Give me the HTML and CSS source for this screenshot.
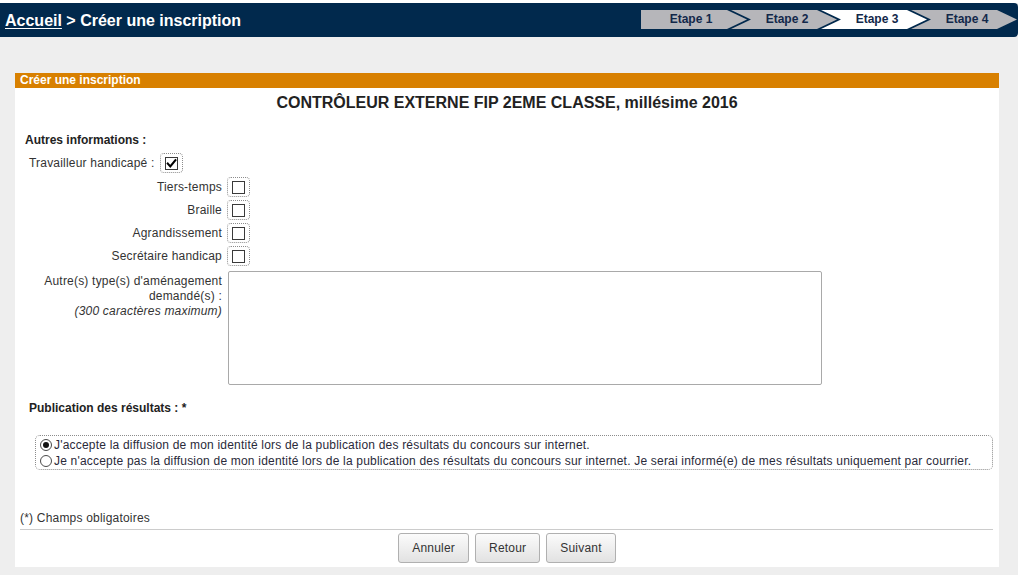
FILE: index.html
```html
<!DOCTYPE html>
<html lang="fr">
<head>
<meta charset="utf-8">
<title>Créer une inscription</title>
<link rel="stylesheet" href="styles.css">
</head>
<body>
<div class="page">
  <header class="topbar">
    <h1 class="crumb"><a href="#" class="crumb-link">Accueil</a> &gt; Créer une inscription</h1>
    <ol class="steps">
      <li class="step step-first">Etape 1</li>
      <li class="step">Etape 2</li>
      <li class="step step-current">Etape 3</li>
      <li class="step">Etape 4</li>
    </ol>
  </header>

  <main class="panel">
    <div class="panel-head">Créer une inscription</div>
    <h2 class="concours">CONTRÔLEUR EXTERNE FIP 2EME CLASSE, millésime 2016</h2>

    <section class="form">
      <h3 class="section-title">Autres informations :</h3>

      <div class="row-main">
        <span class="label-main">Travailleur handicapé :</span>
        <span class="cb-wrap"><span class="cb"><svg class="check" viewBox="0 0 11 11" width="11" height="11"><path d="M1.8 5.6 L4.3 8.4 L9.4 2.2" fill="none" stroke="#000" stroke-width="2.1" stroke-linecap="square"/></svg></span></span>
      </div>

      <div class="row row-first">
        <span class="label">Tiers-temps</span>
        <span class="cb-wrap"><span class="cb"></span></span>
      </div>
      <div class="row">
        <span class="label">Braille</span>
        <span class="cb-wrap"><span class="cb"></span></span>
      </div>
      <div class="row">
        <span class="label">Agrandissement</span>
        <span class="cb-wrap"><span class="cb"></span></span>
      </div>
      <div class="row">
        <span class="label">Secrétaire handicap</span>
        <span class="cb-wrap"><span class="cb"></span></span>
      </div>

      <div class="row row-text">
        <label class="label label-text" for="amenagement">Autre(s) type(s) d'aménagement<br>demandé(s) :<br><em>(300 caractères maximum)</em></label>
        <textarea id="amenagement" class="textarea"></textarea>
      </div>

      <h3 class="section-title section-pub">Publication des résultats : *</h3>

      <div class="radios">
        <div class="radio-line"><span class="radio radio-on"></span>J'accepte la diffusion de mon identité lors de la publication des résultats du concours sur internet.</div>
        <div class="radio-line"><span class="radio"></span>Je n'accepte pas la diffusion de mon identité lors de la publication des résultats du concours sur internet. Je serai informé(e) de mes résultats uniquement par courrier.</div>
      </div>
    </section>

    <p class="note">(*) Champs obligatoires</p>
    <div class="actions">
      <button class="btn" type="button">Annuler</button>
      <button class="btn" type="button">Retour</button>
      <button class="btn" type="button">Suivant</button>
    </div>
  </main>
</div>
</body>
</html>
```

FILE: styles.css
```css
* { box-sizing: border-box; }

html, body {
  margin: 0;
  padding: 0;
  background: #ffffff;
}

body {
  padding-top: 3px;
  font-family: "Liberation Sans", Arial, sans-serif;
  font-size: 12px;
  letter-spacing: 0.2px;
  color: #333333;
}

.page {
  width: 1018px;
  height: 572px;
  background: #eeeeee;
  display: flex;
  flex-direction: column;
}

/* ---------- top bar ---------- */
.topbar {
  height: 34px;
  background: #01294d;
  border-radius: 0 4px 4px 0;
  display: flex;
  align-items: center;
  justify-content: space-between;
  padding-left: 5px;
}

.crumb {
  margin: 2px 0 0;
  font-size: 16px;
  letter-spacing: 0;
  font-weight: bold;
  color: #ffffff;
  line-height: 20px;
}

.crumb-link {
  color: #ffffff;
  text-decoration: underline;
  text-underline-offset: 2px;
}

.steps {
  list-style: none;
  margin: 0 1px 1px 0;
  padding: 0;
  display: flex;
}

.step {
  width: 106px;
  height: 19px;
  line-height: 19px;
  padding: 0 18px 0 24px;
  text-align: center;
  font-weight: bold;
  font-size: 12px;
  letter-spacing: 0;
  color: #12284a;
  background: #b6b6ba;
  margin-left: -16px;
  clip-path: polygon(0 0, 86px 0, 106px 50%, 86px 100%, 0 100%, 20px 50%);
}

.step-first {
  margin-left: 0;
  padding-left: 12px;
  clip-path: polygon(0 0, 86px 0, 106px 50%, 86px 100%, 0 100%);
}

.step-current {
  background: #ffffff;
}

/* ---------- panel ---------- */
.panel {
  margin: 36px 19px 8px 15px;
  background: #ffffff;
  flex: 1;
  display: flex;
  flex-direction: column;
}

.panel-head {
  height: 15px;
  line-height: 15px;
  background: #d88000;
  color: #ffffff;
  font-weight: bold;
  letter-spacing: 0;
  padding-left: 5px;
}

.concours {
  margin: 5px 0 0;
  line-height: 20px;
  font-size: 16px;
  font-weight: bold;
  letter-spacing: 0;
  text-align: center;
  color: #222222;
}

.form {
  padding-left: 10px;
}

.section-title {
  margin: 20px 0 0;
  font-size: 12px;
  line-height: 15px;
  font-weight: bold;
  letter-spacing: 0;
  color: #222222;
}

.section-pub {
  margin-top: 16px;
  padding-left: 4px;
}

.row-main {
  margin-top: 5px;
  padding-left: 4px;
  display: flex;
  align-items: center;
  gap: 5px;
  height: 20px;
}

.row {
  margin-top: 3px;
  display: flex;
  align-items: center;
  gap: 5px;
  height: 20px;
}

.row-first {
  margin-top: 4px;
}

.label {
  width: 197px;
  text-align: right;
}

.cb-wrap {
  width: 23px;
  height: 20px;
  border: 1px dotted #8c8c8c;
  border-radius: 4px;
  display: flex;
  align-items: center;
  justify-content: center;
}

.cb {
  width: 13px;
  height: 13px;
  border: 1px solid #3a3a3a;
  background: #ffffff;
  display: flex;
  align-items: center;
  justify-content: center;
}

.check {
  display: block;
}

.row-text {
  margin-top: 5px;
  height: auto;
  align-items: flex-start;
  gap: 6px;
}

.label-text {
  padding-top: 3px;
  line-height: 15px;
}

.label-text em {
  font-style: italic;
}

.textarea {
  width: 594px;
  height: 114px;
  border: 1px solid #a9a9a9;
  border-radius: 2px;
  resize: none;
  margin: 0;
  font-family: inherit;
}

.radios {
  margin: 19px 6px 0 10px;
  border: 1px dotted #8c8c8c;
  border-radius: 5px;
  padding: 1px 4px 0;
  height: 35px;
}

.radio-line {
  display: flex;
  align-items: center;
  line-height: 16px;
  height: 16px;
  color: #2a2a3a;
}

.radio {
  width: 12px;
  height: 12px;
  border: 1px solid #4a4a4a;
  border-radius: 50%;
  margin-right: 2px;
  flex: none;
  display: flex;
  align-items: center;
  justify-content: center;
  background: #ffffff;
}

.radio-on::after {
  content: "";
  width: 6px;
  height: 6px;
  border-radius: 50%;
  background: #111111;
}

.note {
  margin: 41px 6px 0 5px;
  line-height: 15px;
  padding-bottom: 3px;
  border-bottom: 1px solid #cccccc;
}

.actions {
  margin-top: 3px;
  display: flex;
  justify-content: center;
  gap: 6px;
}

.btn {
  height: 30px;
  padding: 0 13px;
  font-family: "Liberation Sans", Arial, sans-serif;
  font-size: 12px;
  letter-spacing: 0.2px;
  color: #333333;
  background: linear-gradient(#fbfbfb, #e2e2e2);
  border: 1px solid #b0b0b0;
  border-radius: 3px;
}
```
